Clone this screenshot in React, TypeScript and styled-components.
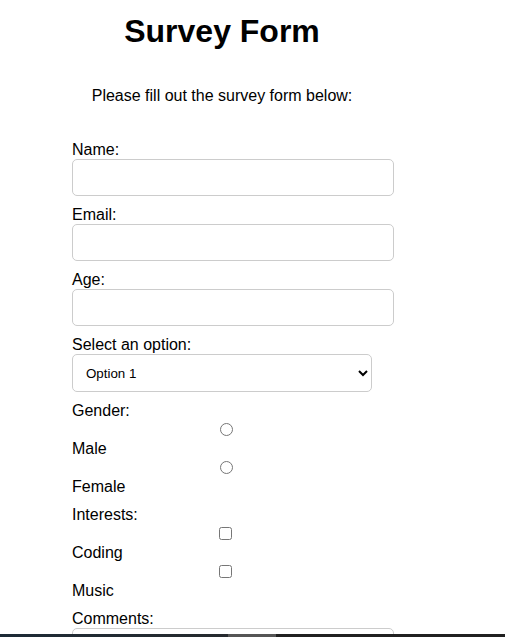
import React from "react";
import styled, { createGlobalStyle } from "styled-components";

const GlobalStyle = createGlobalStyle`
  html { scrollbar-width: none; }
  html::-webkit-scrollbar { display: none; }
  body {
    margin: 0;
    background: #fff;
    color: #000;
    font-family: "Liberation Sans", Arial, sans-serif;
  }
`;

const Page = styled.main`
  padding: 13px 0 0 72px;
`;

const Form = styled.form`
  width: 300px;
`;

const Title = styled.h1`
  margin: 0 0 37px;
  font-size: 32px;
  font-weight: bold;
  line-height: normal;
  text-align: center;
`;

const Intro = styled.p`
  margin: 0 0 36px;
  font-size: 16px;
  text-align: center;
`;

const FieldLabel = styled.label`
  display: block;
  font-size: 16px;
  line-height: normal;
`;

const TextInput = styled.input`
  display: block;
  box-sizing: border-box;
  width: 322px;
  height: 37px;
  margin: 0 0 10px;
  padding: 10px;
  border: 1px solid #ccc;
  border-radius: 5px;
  font-family: "Liberation Sans", Arial, sans-serif;
  font-size: 13.333px;
  background: #fff;
`;

const Select = styled.select`
  display: block;
  box-sizing: border-box;
  width: 300px;
  height: 38px;
  margin: 0 0 10px;
  padding: 0 6px 0 9px;
  border: 1px solid #ccc;
  border-radius: 5px;
  font-family: "Liberation Sans", Arial, sans-serif;
  font-size: 13.333px;
  color: #000;
  background: #fff;
`;

const Group = styled.div`
  margin: 0 0 10px;
`;

const ChoiceInput = styled.input<{ $offset: number }>`
  display: block;
  width: 13px;
  height: 13px;
  margin: 3px 0 4px ${(p) => p.$offset}px;
  accent-color: #767676;
`;

const TextArea = styled.textarea`
  display: block;
  width: 300px;
  height: 80px;
  margin: 0;
  padding: 10px;
  border: 1px solid #ccc;
  border-radius: 5px;
  font-family: "Liberation Sans", Arial, sans-serif;
  font-size: 13.333px;
  resize: vertical;
`;

const TaskStrip = styled.div`
  position: fixed;
  left: 0;
  right: 0;
  bottom: 0;
  height: 3px;
  background: linear-gradient(
    to right,
    #1d2a36 0px,
    #262a2e 228px,
    #555555 228px,
    #555555 276px,
    #202020 276px,
    #202020 100%
  );
`;

type Choice = { id: string; label: string };

const genders: Choice[] = [
  { id: "male", label: "Male" },
  { id: "female", label: "Female" },
];

const interests: Choice[] = [
  { id: "coding", label: "Coding" },
  { id: "music", label: "Music" },
];

export default function App() {
  return (
    <>
      <GlobalStyle />
      <Page>
        <Form onSubmit={(e) => e.preventDefault()}>
          <Title>Survey Form</Title>
          <Intro>Please fill out the survey form below:</Intro>

          <FieldLabel htmlFor="name">Name:</FieldLabel>
          <TextInput id="name" type="text" />

          <FieldLabel htmlFor="email">Email:</FieldLabel>
          <TextInput id="email" type="email" />

          <FieldLabel htmlFor="age">Age:</FieldLabel>
          <TextInput id="age" type="number" />

          <FieldLabel htmlFor="option">Select an option:</FieldLabel>
          <Select id="option" defaultValue="1">
            <option value="1">Option 1</option>
            <option value="2">Option 2</option>
            <option value="3">Option 3</option>
          </Select>

          <Group>
            <FieldLabel>Gender:</FieldLabel>
            {genders.map((g) => (
              <React.Fragment key={g.id}>
                <ChoiceInput $offset={148} type="radio" name="gender" id={g.id} />
                <FieldLabel htmlFor={g.id}>{g.label}</FieldLabel>
              </React.Fragment>
            ))}
          </Group>

          <Group>
            <FieldLabel>Interests:</FieldLabel>
            {interests.map((c) => (
              <React.Fragment key={c.id}>
                <ChoiceInput $offset={147} type="checkbox" id={c.id} />
                <FieldLabel htmlFor={c.id}>{c.label}</FieldLabel>
              </React.Fragment>
            ))}
          </Group>

          <FieldLabel htmlFor="comments">Comments:</FieldLabel>
          <TextArea id="comments" />
        </Form>
      </Page>
      <TaskStrip />
    </>
  );
}
